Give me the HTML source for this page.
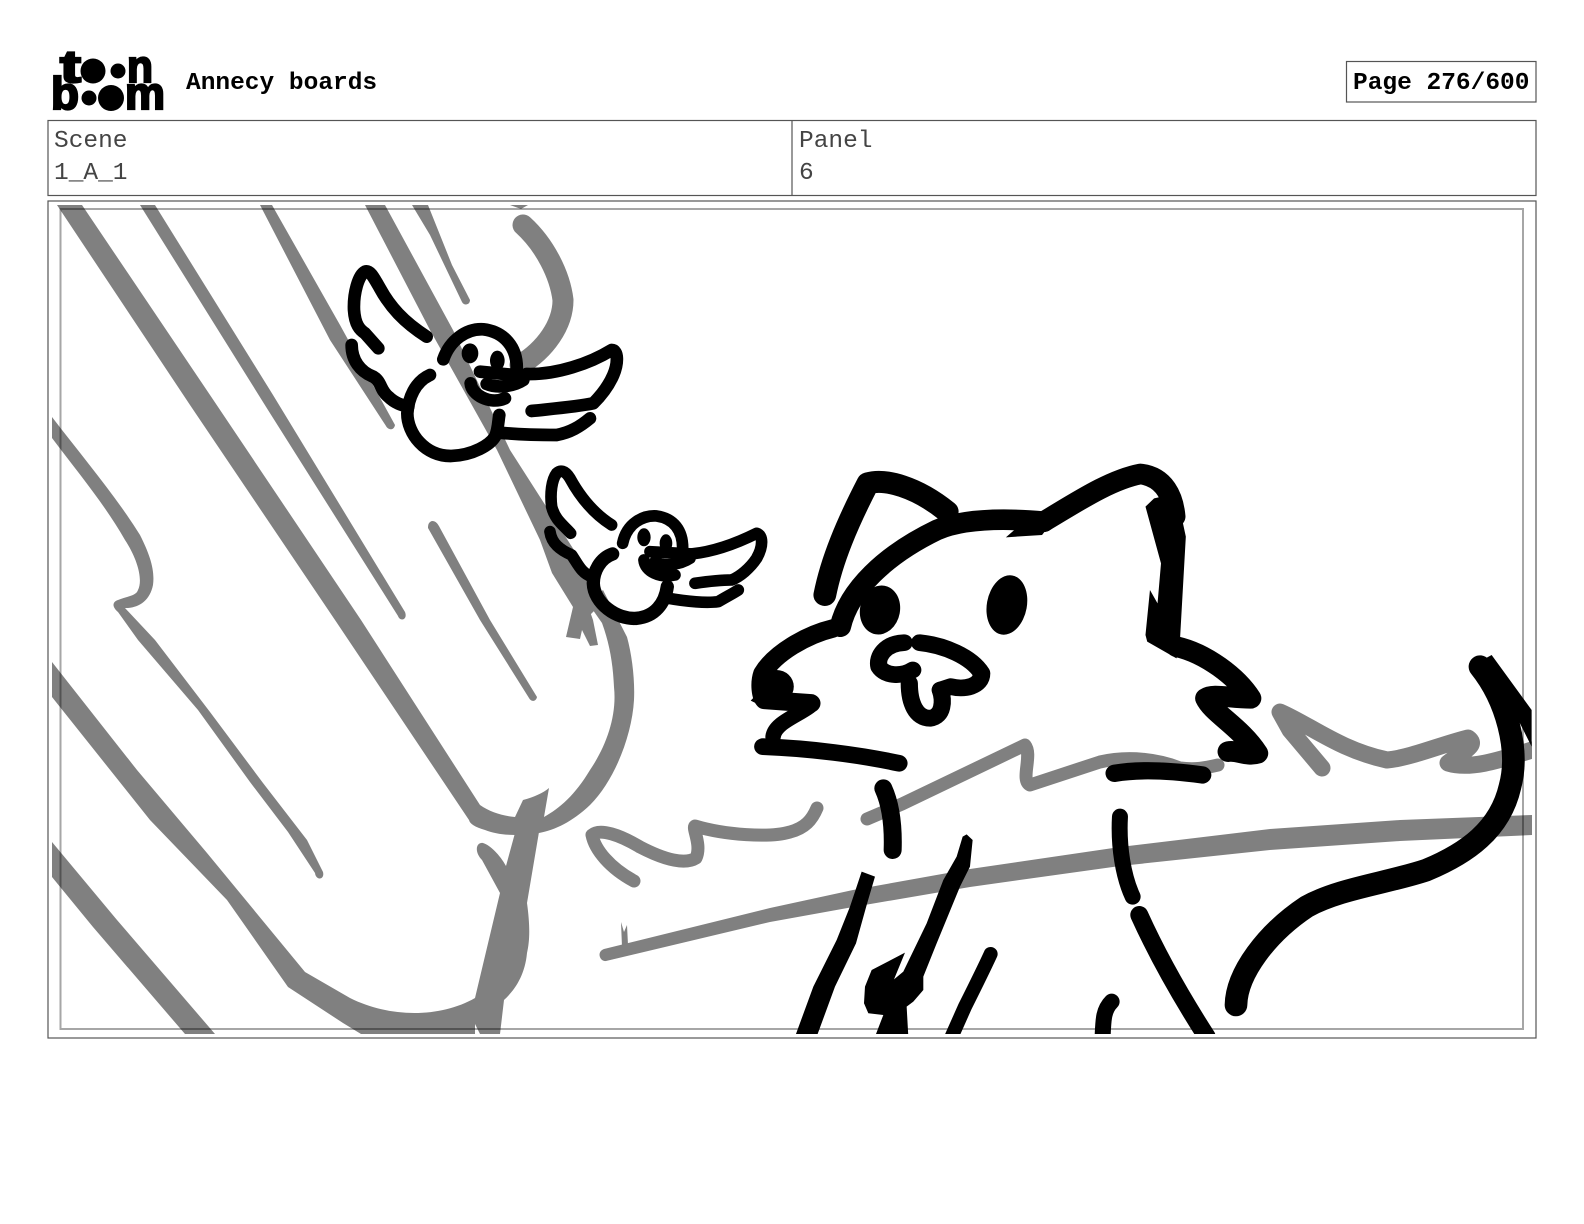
<!DOCTYPE html>
<html><head><meta charset="utf-8"><title>Annecy boards</title>
<style>html,body{margin:0;padding:0;background:#fff;width:1584px;height:1224px;overflow:hidden}svg{display:block}</style></head>
<body>
<svg width="1584" height="1224" viewBox="0 0 1584 1224" xmlns="http://www.w3.org/2000/svg">
<defs><clipPath id="art"><rect x="52" y="205" width="1480" height="829"/></clipPath></defs>
<rect width="1584" height="1224" fill="#fff"/>
<!-- logo -->
<g fill="#000" font-family="'Liberation Sans',sans-serif" font-weight="700" font-size="45" stroke="#000" stroke-width="2.2">
<text x="60" y="82" textLength="21" lengthAdjust="spacingAndGlyphs">t</text>
<text x="127" y="82" textLength="26" lengthAdjust="spacingAndGlyphs">n</text>
<text x="51" y="109" textLength="28" lengthAdjust="spacingAndGlyphs">b</text>
<text x="125" y="109" textLength="40" lengthAdjust="spacingAndGlyphs">m</text>
<circle cx="93" cy="71" r="12.5" stroke="none"/><circle cx="118" cy="71" r="7.5" stroke="none"/>
<circle cx="89" cy="98" r="7.5" stroke="none"/><circle cx="111" cy="98" r="13" stroke="none"/>
</g>
<g font-family="'Liberation Mono',monospace" font-size="24.5" fill="#000">
<text x="186" y="89" font-weight="700">Annecy boards</text>
<text x="1353" y="89" font-weight="700">Page 276/600</text>
<text x="54" y="147" fill="#444">Scene</text>
<text x="54" y="179" fill="#444">1_A_1</text>
<text x="799" y="147" fill="#444">Panel</text>
<text x="799" y="179" fill="#444">6</text>
</g>
<g fill="none" stroke="#555" stroke-width="1.2">
<rect x="1346.5" y="61.5" width="189.5" height="40.5"/>
<rect x="48" y="120.5" width="1488" height="75"/>
<path d="M792 120.5V195.5"/>
<rect x="48" y="201" width="1488" height="837"/>
</g>
<g clip-path="url(#art)">
<!-- gray -->
<g fill="#808080">
<!-- main thick stroke -->
<path d="M57 205H82L210 395L361 620L480 805C490 812 503 816 515 817L523 800C534 797 543 793 549 788L544 817C560 808 575 795 590 770C607 745 617 715 614 687C613 665 610 645 602 623L588 603L603 590L627 637C632 655 635 680 634 700C632 735 615 780 590 805C572 822 555 830 539 833C520 836 500 836 485 830C475 827 470 824 469 820L335 620L190 405Z"/>
<!-- right trunk edge -->
<path d="M365 205H385L453 330L510 450L590 575L605 600L590 615L573 607L552 573L540 540L497 450L430 330Z"/>
<path d="M566 637L580 639L582 630L590 646L598 645L593 620L587 603L573 607Z"/>
<path d="M412 205H428L452 265L470 300C470 305 464 306 462 302L430 235Z"/>
<path d="M140 205H155L273 395L405 612C408 620 400 622 398 616L268 410Z"/>
<path d="M260 205H272L340 325L395 425C394 431 388 430 386 426L330 340Z"/>
<path d="M432 521C436 521 438 524 440 528L490 620L537 697C536 702 531 702 529 698L480 620L428 528C428 524 429 522 432 521Z"/>
<path d="M510 205H528L521 209Z"/>
<!-- vertical trunk -->
<path d="M515 833L539 832L527 903C530 925 530 940 527 953C525 975 515 990 504 1000L500 1034H480L473 1020L475 998L500 893L482 860C474 852 476 842 483 843C490 845 500 855 506 866Z"/>
<!-- left shapes -->
<path d="M52 417C85 460 115 495 140 535C150 555 155 570 153 585C150 600 140 607 128 608L125 608L155 640L210 712L263 783L307 840L323 872C325 880 316 881 315 873L288 832L250 782L198 710L138 640L118 612C112 607 112 602 118 600C128 596 136 596 138 590C143 580 138 560 125 540C105 505 80 475 52 438Z"/>
<path d="M52 662L137 770L207 853L305 972L350 998C390 1018 440 1018 475 998V1034H464L475 1025L464 1034H361L343 1023L288 987L227 900L150 820L52 697Z"/>
<path d="M52 842L117 920L215 1034H185L93 927L52 877Z"/>
<!-- horizon -->
<path d="M604 949L770 908L853 890L970 869L1120 847L1270 829L1400 820L1532 815V835L1400 841L1270 850L1120 866L970 887L853 907L770 922L606 961C600 962 596 952 604 949Z"/>
<path d="M621 922L624 932L627 925L628 945L622 947Z"/>
</g>
<g fill="none" stroke="#808080" stroke-linecap="round" stroke-linejoin="round">
<path d="M523 225C545 245 560 275 563 300C563 325 545 350 520 365" stroke-width="21"/>
<path d="M634 881C610 868 595 850 592 835C600 828 620 835 640 847C665 860 685 865 696 858C702 845 692 828 695 826C725 835 770 838 790 832C805 828 812 820 817 808" stroke-width="13"/>
<path d="M867 819L902 804L1025 745C1033 755 1020 780 1030 785L1100 762C1130 755 1160 760 1180 768C1195 770 1205 768 1218 765" stroke-width="13"/>
<path d="M1322 768L1290 730L1280 712C1310 725 1340 750 1387 760C1410 758 1440 745 1468 738C1478 745 1465 750 1448 763C1470 770 1500 760 1532 750" stroke-width="17"/>
</g>
</g>
<!-- guide -->
<rect x="60.5" y="209" width="1462.5" height="820" fill="none" stroke="#000" stroke-opacity=".35" stroke-width="2"/>
<g clip-path="url(#art)">
<!-- bird 1 -->
<g transform="translate(330 250) scale(.3333)" fill="none" stroke="#000" stroke-width="38" stroke-linecap="round" stroke-linejoin="round">
<path d="M290 260C220 215 180 170 150 115C130 80 120 60 105 65C85 75 70 130 72 180C75 225 90 240 105 250L145 295"/>
<path d="M65 285C65 330 90 365 130 380C155 395 150 420 175 440C195 460 215 465 235 470" />
<path d="M300 375C255 395 235 445 232 490C232 550 285 620 365 618C430 615 480 585 495 560C505 540 505 510 508 495"/>
<path d="M340 328C360 270 410 235 460 238C520 245 565 290 560 365"/>
<ellipse cx="420" cy="310" rx="25" ry="30" fill="#000" stroke="none"/>
<ellipse cx="502" cy="332" rx="22" ry="30" fill="#000" stroke="none"/>
<path d="M450 365L585 378"/>
<path d="M470 402C500 415 550 410 580 390"/>
<path d="M422 400C425 435 480 465 525 445"/>
<path d="M590 372C680 375 780 340 845 300C865 300 865 340 850 375C835 410 810 440 790 460C740 470 680 475 605 483"/>
<path d="M510 548C580 555 640 555 680 555C720 548 750 530 780 505"/>
</g>
<!-- bird 2 -->
<g transform="translate(330 250) scale(.3333)" fill="none" stroke="#000" stroke-width="35" stroke-linecap="round" stroke-linejoin="round">
<path d="M845 825C790 790 750 740 720 685C705 660 690 660 680 670C665 690 660 730 665 770C675 810 700 825 722 850"/>
<path d="M660 845C665 880 690 900 725 915C745 945 755 970 785 980"/>
<path d="M848 912C810 925 790 965 790 1000C792 1060 860 1110 920 1105C975 1100 1005 1060 1012 1010" stroke-width="40"/>
<path d="M878 880C890 820 940 795 980 798C1030 805 1060 840 1058 900"/>
<ellipse cx="942" cy="862" rx="20" ry="27" fill="#000" stroke="none"/>
<ellipse cx="1008" cy="880" rx="19" ry="27" fill="#000" stroke="none"/>
<path d="M960 905L1085 912"/>
<path d="M975 935C1000 950 1050 945 1080 925"/>
<path d="M942 930C945 965 990 985 1035 975"/>
<path d="M1085 912C1150 905 1220 880 1280 850C1300 855 1300 890 1280 925C1260 955 1230 980 1205 990C1170 990 1130 995 1095 1000"/>
<path d="M1015 1045C1070 1055 1130 1060 1165 1055C1190 1040 1210 1030 1225 1020"/>
</g>
<!-- cat head -->
<g transform="translate(730 450) scale(.3448 .3333)" fill="none" stroke="#000" stroke-linecap="round" stroke-linejoin="round">
<path d="M275 435C295 330 340 220 400 100C450 85 540 110 630 185" stroke-width="66"/>
<path d="M320 530C345 420 450 315 600 240C680 205 800 205 910 215" stroke-width="62"/>
<path d="M910 215C1000 160 1100 90 1190 72C1260 80 1285 140 1290 200" stroke-width="62"/>
<path d="M1230 145L1295 130L1322 260L1305 570L1295 625L1210 575L1205 555L1218 420L1240 460L1250 340L1205 170Z" fill="#000" stroke="none"/>
<path d="M800 262L830 235H920L905 255Z" fill="#000" stroke="none"/>
<path d="M300 535C220 555 130 610 95 670C85 700 90 740 100 750L235 760" stroke-width="55"/>
<circle cx="135" cy="710" r="50" fill="#000" stroke="none"/>
<path d="M60 752L90 720L95 770Z" fill="#000" stroke="none"/>
<path d="M230 770C190 800 130 820 125 860" stroke-width="45"/>
<path d="M95 890C230 895 380 915 490 940" stroke-width="50"/>
<ellipse cx="435" cy="480" rx="58" ry="74" transform="rotate(10 435 480)" fill="#000" stroke="none"/>
<ellipse cx="803" cy="465" rx="58" ry="90" transform="rotate(10 803 465)" fill="#000" stroke="none"/>
<path d="M505 578C450 580 425 620 432 650C450 680 500 680 530 660" stroke-width="50"/>
<path d="M550 578C620 585 700 620 730 670C730 710 680 720 640 710L610 720" stroke-width="50"/>
<path d="M520 700C520 760 540 805 580 805C620 800 620 750 610 720" stroke-width="50"/>
<path d="M1295 590C1380 610 1470 680 1510 745C1450 745 1400 730 1380 745C1400 790 1480 830 1530 910C1500 920 1470 900 1445 905" stroke-width="62"/>
<path d="M1115 970C1200 955 1300 965 1370 975" stroke-width="52"/>
</g>
<!-- cat body -->
<g transform="translate(770 780) scale(.3333)" fill="none" stroke="#000" stroke-linecap="round" stroke-linejoin="round">
<path d="M340 25C365 80 370 150 368 210" stroke-width="54"/>
<path d="M275 275L315 290L290 375L258 490L195 620L140 770H75L130 620L200 480L240 380Z" fill="#000" stroke="none"/>
<path d="M578 170L590 163L608 180L600 260L570 320L500 490L460 590L460 630L430 665L410 680L415 770H315L340 705L295 700L282 670L285 620L305 570L405 518L372 598L400 575L470 430L520 300L560 230Z" fill="#000" stroke="none"/>
<path d="M662 522C640 570 610 630 585 680L545 770" stroke-width="42"/>
<path d="M1050 110C1045 200 1060 290 1088 350" stroke-width="48"/>
<path d="M1108 405C1160 520 1220 630 1310 770" stroke-width="54"/>
<path d="M1025 665C1000 690 1000 720 998 770" stroke-width="48"/>
</g>
<!-- tail -->
<g transform="translate(1200 630) scale(.3333)" fill="none" stroke="#000" stroke-linecap="round" stroke-linejoin="round">
<path d="M108 1125C110 1030 200 910 320 830C420 775 560 760 680 720C800 670 900 600 930 470C960 360 920 210 840 110" stroke-width="68"/>
<path d="M820 105L875 75L995 240V350L960 280Z" fill="#000" stroke="none"/>
</g>
</g>
</svg>
</body></html>
